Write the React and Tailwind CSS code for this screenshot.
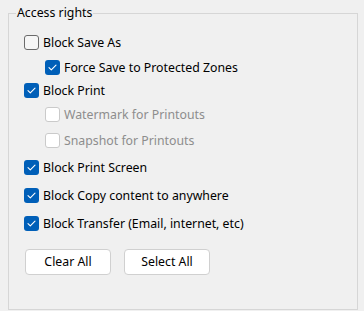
import React from "react";

function Box({ checked, disabled }) {
  if (checked) {
    return (
      <span className="flex h-[15px] w-[15px] shrink-0 items-center justify-center rounded-[3px] bg-[#005fb8]">
        <svg width="15" height="15" viewBox="0 0 15 15">
          <path d="M4 7.6 L6.3 9.9 L11 5.2" fill="none" stroke="#ffffff" strokeWidth="1.1" strokeLinecap="round" strokeLinejoin="round" />
        </svg>
      </span>
    );
  }
  return (
    <span
      className={
        disabled
          ? "block h-[15px] w-[15px] shrink-0 rounded-[3px] border border-[#cacaca] bg-white"
          : "block h-[15px] w-[15px] shrink-0 rounded-[3px] border border-[#6b6b6b] bg-[#f6f6f6]"
      }
    />
  );
}

function Row({ label, checked, disabled, className }) {
  return (
    <div className={"flex h-[15px] items-center gap-[4px] " + className}>
      <Box checked={checked} disabled={disabled} />
      <span className={disabled ? "text-[#8d8d8d]" : "text-black"}>{label}</span>
    </div>
  );
}

export default function App() {
  return (
    <div
      className="h-[311px] w-[364px] bg-[#f0f0f0] pt-[5px] text-[12.3px] leading-[16px]"
      style={{ fontFamily: '"Noto Sans", "Open Sans", sans-serif' }}
    >
      <fieldset className="ml-[8px] h-[305px] w-[350px] border border-[#d6d6d6] pl-[7px]">
        <legend className="px-[1px] text-black">Access rights</legend>
        <div className="flex flex-col pl-[8px] pt-[14px]">
          <Row label="Block Save As" className="" />
          <Row label="Force Save to Protected Zones" checked className="ml-[21px] mt-[10px]" />
          <Row label="Block Print" checked className="mt-[8px]" />
          <Row label="Watermark for Printouts" disabled className="ml-[21px] mt-[9px]" />
          <Row label="Snapshot for Printouts" disabled className="ml-[21px] mt-[11px]" />
          <Row label="Block Print Screen" checked className="mt-[12px]" />
          <Row label="Block Copy content to anywhere" checked className="mt-[13px]" />
          <Row label="Block Transfer (Email, internet, etc)" checked className="mt-[13px]" />
          <div className="mt-[18px] flex gap-[13px] pl-[1px]">
            <button className="h-[26px] w-[86px] rounded-[4px] border border-[#d0d0d0] bg-white text-black">
              Clear All
            </button>
            <button className="h-[26px] w-[86px] rounded-[4px] border border-[#d0d0d0] bg-white text-black">
              Select All
            </button>
          </div>
        </div>
      </fieldset>
    </div>
  );
}
